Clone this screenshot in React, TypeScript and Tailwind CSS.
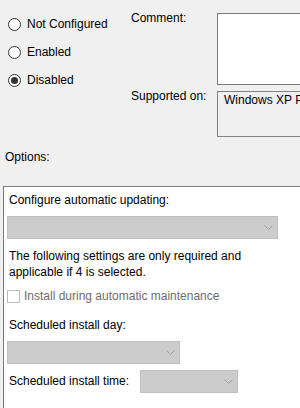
const FONT = "font-['Liberation_Sans',Arial,sans-serif]";

function Radio({ label, checked }: { label: string; checked?: boolean }) {
  return (
    <div className="flex h-[28px] items-center gap-[6px]">
      <div className="flex h-[13px] w-[13px] shrink-0 items-center justify-center rounded-full border border-[#333333] bg-white">
        {checked && <div className="h-[7px] w-[7px] rounded-full bg-[#333333]" />}
      </div>
      <span className="leading-[15px]">{label}</span>
    </div>
  );
}

function Chevron() {
  return (
    <svg width="9" height="5" viewBox="0 0 9 5" className="shrink-0">
      <polyline points="0.5,0.5 4.5,4.5 8.5,0.5" fill="none" stroke="#a3a3a3" strokeWidth="1" />
    </svg>
  );
}

function Dropdown({ width }: { width: string }) {
  return (
    <div className={`flex h-[23px] shrink-0 items-center justify-end border border-[#bfbfbf] bg-[#cccccc] pr-[4px] ${width}`}>
      <Chevron />
    </div>
  );
}

export default function App() {
  return (
    <div className={`flex h-[408px] w-[300px] flex-col overflow-hidden bg-[#f0f0f0] text-[12px] text-black ${FONT}`}>
      {/* Top: state radios + comment / supported on */}
      <div className="flex shrink-0">
        <div className="w-[131px] shrink-0 pl-[8px] pt-[10px]">
          <Radio label="Not Configured" />
          <Radio label="Enabled" />
          <Radio label="Disabled" checked />
        </div>
        <div className="flex flex-col pt-[11px]">
          <div className="flex">
            <span className="w-[86px] shrink-0 leading-[15px]">Comment:</span>
            <div className="mt-[2px] h-[72px] w-[110px] shrink-0 border border-[#7a7a7a] bg-white" />
          </div>
          <div className="mt-[4px] flex">
            <span className="w-[86px] shrink-0 leading-[15px]">Supported on:</span>
            <div className="mt-[2px] h-[46px] w-[110px] shrink-0 overflow-hidden whitespace-nowrap border border-[#828282] pl-[6px] pt-[1px] leading-[15px]">
              Windows XP Professional Service Pack 1
            </div>
          </div>
        </div>
      </div>

      <div className="mt-[13px] pl-[5px] leading-[15px]">Options:</div>

      {/* Options panel */}
      <div className="ml-[3px] mt-[21px] flex flex-1 flex-col border-l border-t border-[#7a7a7a] bg-white pl-[3px] pt-[6px]">
        <div className="pl-[2px] leading-[15px]">Configure automatic updating:</div>
        <div className="mt-[8px]">
          <Dropdown width="w-[271px]" />
        </div>
        <div className="mt-[9px] pl-[2px] leading-[16px]">
          The following settings are only required and
          <br />
          applicable if 4 is selected.
        </div>
        <div className="mt-[9px] flex h-[15px] items-center gap-[4px]">
          <div className="h-[13px] w-[13px] shrink-0 border border-[#bcbcbc] bg-white" />
          <span className="leading-[15px] text-[#6d6d6d]">Install during automatic maintenance</span>
        </div>
        <div className="mt-[14px] pl-[2px] leading-[15px]">Scheduled install day:</div>
        <div className="mt-[8px]">
          <Dropdown width="w-[173px]" />
        </div>
        <div className="mt-[6px] flex items-center">
          <span className="w-[133px] shrink-0 pl-[2px] leading-[15px]">Scheduled install time:</span>
          <Dropdown width="w-[98px]" />
        </div>
      </div>
    </div>
  );
}
